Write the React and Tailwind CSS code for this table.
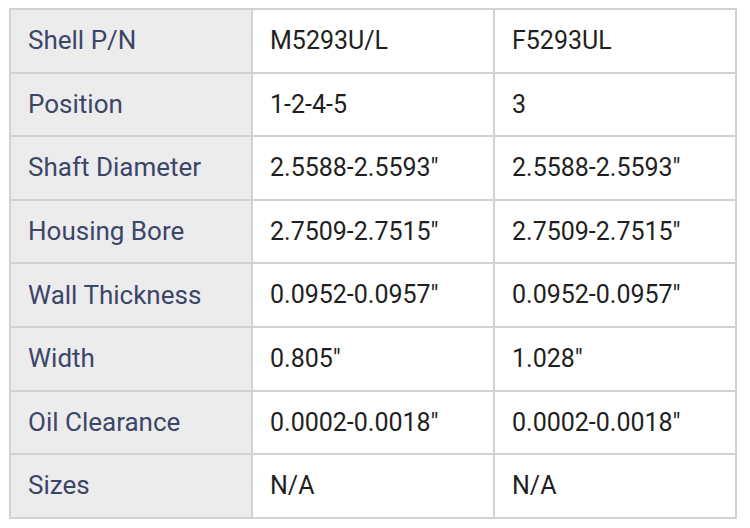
const ROWS = [
  ["Shell P/N", "M5293U/L", "F5293UL"],
  ["Position", "1-2-4-5", "3"],
  ["Shaft Diameter", "2.5588-2.5593\"", "2.5588-2.5593\""],
  ["Housing Bore", "2.7509-2.7515\"", "2.7509-2.7515\""],
  ["Wall Thickness", "0.0952-0.0957\"", "0.0952-0.0957\""],
  ["Width", "0.805\"", "1.028\""],
  ["Oil Clearance", "0.0002-0.0018\"", "0.0002-0.0018\""],
  ["Sizes", "N/A", "N/A"],
];

export default function App() {
  return (
    <div className="min-h-[528px] w-[750px] bg-white pt-[8px] pl-[9px]" style={{ fontFamily: "Roboto, 'Liberation Sans', sans-serif" }}>
      <table className="w-[726px] table-fixed border-collapse">
        <tbody>
          {ROWS.map(([label, a, b]) => (
            <tr key={label} className="h-[63.6px]">
              <td className="w-[242px] border-2 border-[#d2d2d2] bg-[#ececed] pl-[17px] text-[26px] text-[#3b4668]">{label}</td>
              <td className="w-[242px] border-2 border-[#d2d2d2] pl-[17px] text-[25px] text-[#1f1f1f]">{a}</td>
              <td className="w-[242px] border-2 border-[#d2d2d2] pl-[17px] text-[25px] text-[#1f1f1f]">{b}</td>
            </tr>
          ))}
        </tbody>
      </table>
    </div>
  );
}
